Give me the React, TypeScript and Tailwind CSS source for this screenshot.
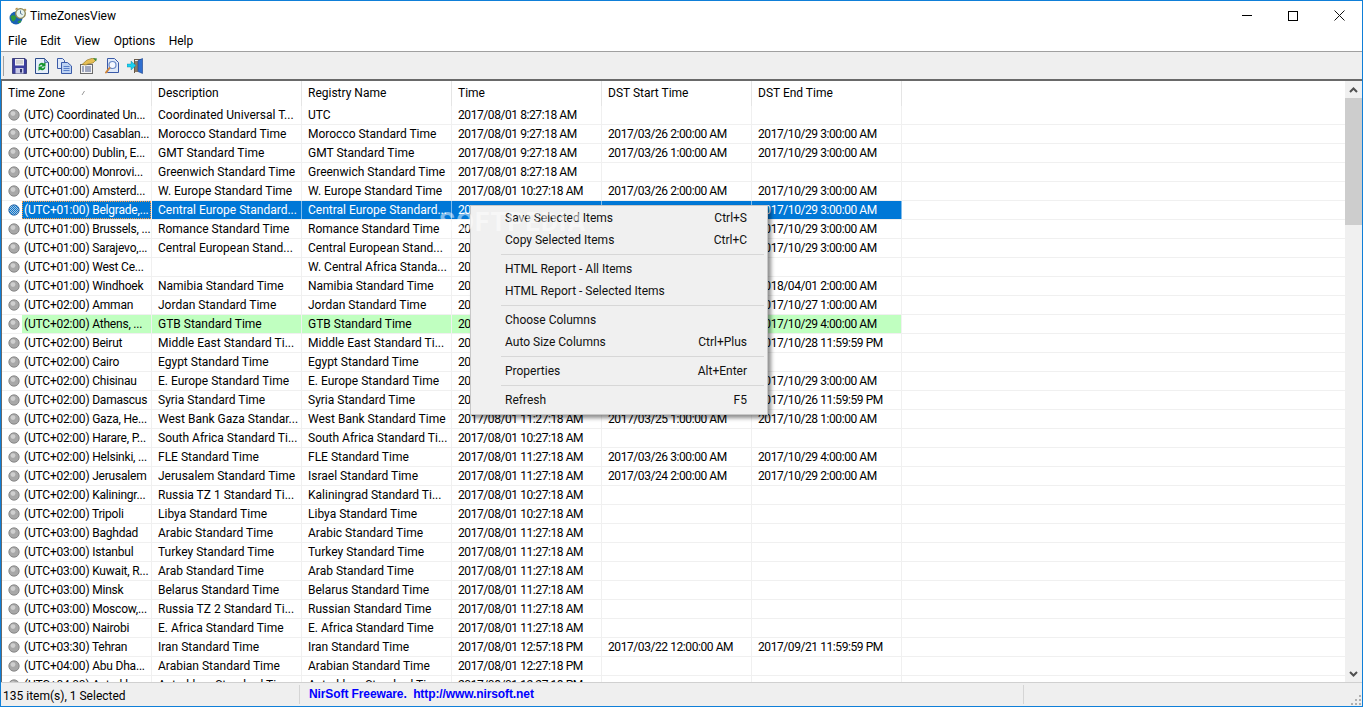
const font = "font-['Roboto',sans-serif]";

type Row = [string, string, string, string, string?, string?];

const rows: Row[] = [
  ['(UTC) Coordinated Un...', 'Coordinated Universal T...', 'UTC', '2017/08/01 8:27:18 AM'],
  ['(UTC+00:00) Casablan...', 'Morocco Standard Time', 'Morocco Standard Time', '2017/08/01 9:27:18 AM', '2017/03/26 2:00:00 AM', '2017/10/29 3:00:00 AM'],
  ['(UTC+00:00) Dublin, E...', 'GMT Standard Time', 'GMT Standard Time', '2017/08/01 9:27:18 AM', '2017/03/26 1:00:00 AM', '2017/10/29 3:00:00 AM'],
  ['(UTC+00:00) Monrovi...', 'Greenwich Standard Time', 'Greenwich Standard Time', '2017/08/01 8:27:18 AM'],
  ['(UTC+01:00) Amsterd...', 'W. Europe Standard Time', 'W. Europe Standard Time', '2017/08/01 10:27:18 AM', '2017/03/26 2:00:00 AM', '2017/10/29 3:00:00 AM'],
  ['(UTC+01:00) Belgrade,...', 'Central Europe Standard...', 'Central Europe Standard...', '2017/08/01 10:27:18 AM', '2017/03/26 2:00:00 AM', '2017/10/29 3:00:00 AM'],
  ['(UTC+01:00) Brussels, ...', 'Romance Standard Time', 'Romance Standard Time', '2017/08/01 10:27:18 AM', '2017/03/26 2:00:00 AM', '2017/10/29 3:00:00 AM'],
  ['(UTC+01:00) Sarajevo,...', 'Central European Stand...', 'Central European Stand...', '2017/08/01 10:27:18 AM', '2017/03/26 2:00:00 AM', '2017/10/29 3:00:00 AM'],
  ['(UTC+01:00) West Ce...', '', 'W. Central Africa Standa...', '2017/08/01 9:27:18 AM'],
  ['(UTC+01:00) Windhoek', 'Namibia Standard Time', 'Namibia Standard Time', '2017/08/01 10:27:18 AM', '2017/09/03 2:00:00 AM', '2018/04/01 2:00:00 AM'],
  ['(UTC+02:00) Amman', 'Jordan Standard Time', 'Jordan Standard Time', '2017/08/01 11:27:18 AM', '2017/03/30 11:59:59 PM', '2017/10/27 1:00:00 AM'],
  ['(UTC+02:00) Athens, ...', 'GTB Standard Time', 'GTB Standard Time', '2017/08/01 11:27:18 AM', '2017/03/26 3:00:00 AM', '2017/10/29 4:00:00 AM'],
  ['(UTC+02:00) Beirut', 'Middle East Standard Ti...', 'Middle East Standard Ti...', '2017/08/01 11:27:18 AM', '2017/03/25 11:59:59 PM', '2017/10/28 11:59:59 PM'],
  ['(UTC+02:00) Cairo', 'Egypt Standard Time', 'Egypt Standard Time', '2017/08/01 10:27:18 AM'],
  ['(UTC+02:00) Chisinau', 'E. Europe Standard Time', 'E. Europe Standard Time', '2017/08/01 11:27:18 AM', '2017/03/26 2:00:00 AM', '2017/10/29 3:00:00 AM'],
  ['(UTC+02:00) Damascus', 'Syria Standard Time', 'Syria Standard Time', '2017/08/01 11:27:18 AM', '2017/03/30 11:59:59 PM', '2017/10/26 11:59:59 PM'],
  ['(UTC+02:00) Gaza, He...', 'West Bank Gaza Standar...', 'West Bank Standard Time', '2017/08/01 11:27:18 AM', '2017/03/25 1:00:00 AM', '2017/10/28 1:00:00 AM'],
  ['(UTC+02:00) Harare, P...', 'South Africa Standard Ti...', 'South Africa Standard Ti...', '2017/08/01 10:27:18 AM'],
  ['(UTC+02:00) Helsinki, ...', 'FLE Standard Time', 'FLE Standard Time', '2017/08/01 11:27:18 AM', '2017/03/26 3:00:00 AM', '2017/10/29 4:00:00 AM'],
  ['(UTC+02:00) Jerusalem', 'Jerusalem Standard Time', 'Israel Standard Time', '2017/08/01 11:27:18 AM', '2017/03/24 2:00:00 AM', '2017/10/29 2:00:00 AM'],
  ['(UTC+02:00) Kaliningr...', 'Russia TZ 1 Standard Ti...', 'Kaliningrad Standard Ti...', '2017/08/01 10:27:18 AM'],
  ['(UTC+02:00) Tripoli', 'Libya Standard Time', 'Libya Standard Time', '2017/08/01 10:27:18 AM'],
  ['(UTC+03:00) Baghdad', 'Arabic Standard Time', 'Arabic Standard Time', '2017/08/01 11:27:18 AM'],
  ['(UTC+03:00) Istanbul', 'Turkey Standard Time', 'Turkey Standard Time', '2017/08/01 11:27:18 AM'],
  ['(UTC+03:00) Kuwait, R...', 'Arab Standard Time', 'Arab Standard Time', '2017/08/01 11:27:18 AM'],
  ['(UTC+03:00) Minsk', 'Belarus Standard Time', 'Belarus Standard Time', '2017/08/01 11:27:18 AM'],
  ['(UTC+03:00) Moscow,...', 'Russia TZ 2 Standard Ti...', 'Russian Standard Time', '2017/08/01 11:27:18 AM'],
  ['(UTC+03:00) Nairobi', 'E. Africa Standard Time', 'E. Africa Standard Time', '2017/08/01 11:27:18 AM'],
  ['(UTC+03:30) Tehran', 'Iran Standard Time', 'Iran Standard Time', '2017/08/01 12:57:18 PM', '2017/03/22 12:00:00 AM', '2017/09/21 11:59:59 PM'],
  ['(UTC+04:00) Abu Dha...', 'Arabian Standard Time', 'Arabian Standard Time', '2017/08/01 12:27:18 PM'],
  ['(UTC+04:00) Astrakh...', 'Astrakhan Standard Time', 'Astrakhan Standard Time', '2017/08/01 12:27:18 PM'],
];

const headers = ['Time Zone', 'Description', 'Registry Name', 'Time', 'DST Start Time', 'DST End Time'];

type MenuEntry = { label: string; keys?: string } | 'sep';

const menu: MenuEntry[] = [
  { label: 'Save Selected Items', keys: 'Ctrl+S' },
  { label: 'Copy Selected Items', keys: 'Ctrl+C' },
  'sep',
  { label: 'HTML Report - All Items' },
  { label: 'HTML Report - Selected Items' },
  'sep',
  { label: 'Choose Columns' },
  { label: 'Auto Size Columns', keys: 'Ctrl+Plus' },
  'sep',
  { label: 'Properties', keys: 'Alt+Enter' },
  'sep',
  { label: 'Refresh', keys: 'F5' },
];

function Ball({ selected }: { selected?: boolean }) {
  return (
    <svg width="12" height="12" viewBox="0 0 12 12" className="shrink-0">
      <defs>
        <pattern id="dither" width="2" height="2" patternUnits="userSpaceOnUse">
          <rect width="2" height="2" fill="#b5c4d6" />
          <rect width="1" height="1" fill="#0078d7" />
          <rect x="1" y="1" width="1" height="1" fill="#0078d7" />
        </pattern>
      </defs>
      <circle cx="6" cy="6" r="5.200" fill={selected ? 'url(#dither)' : '#a8a8a8'} stroke={selected ? '#1e5a9c' : '#7a7a7a'} strokeWidth="0.8" />
      {!selected && <circle cx="5" cy="4.600" r="2.400" fill="#cfcfcf" />}
    </svg>
  );
}

function AppIcon() {
  return (
    <svg width="18" height="18" viewBox="0 0 18 18">
      <circle cx="7" cy="11" r="6.500" fill="#1a62b5" />
      <path d="M1.500 9.500c2-2 4-1.500 5-.5s.5 3-.5 4-2 2.500-3 .5zM8.500 15.500c.5-2 3-2.500 4-1.500-1 2-2.500 2.500-4 1.500z" fill="#2f9a3a" />
      <path d="M6.500 2.500l2-1.500M15.500 2l1.500 1.500" stroke="#b5893a" strokeWidth="1.500" />
      <circle cx="11.500" cy="6.500" r="4.800" fill="#e6f2ee" stroke="#8a8450" strokeWidth="1.300" />
      <path d="M11.500 3.500v3l2 1" fill="none" stroke="#4a6a8a" strokeWidth="0.900" />
    </svg>
  );
}

function SaveIcon() {
  return (
    <svg width="15" height="16" viewBox="0 0 15 16">
      <path d="M.5.500h12.500l1.500 1.500v13.500H.5z" fill="#3c3f9e" stroke="#20245f" strokeWidth="0.700" />
      <rect x="3" y="1" width="9" height="6.500" fill="#f0f0f0" />
      <path d="M4 3h7M4 5h7" stroke="#b5b5b5" />
      <rect x="3.500" y="10" width="8" height="5.500" fill="#c9cbe6" />
      <rect x="8" y="11" width="2" height="3.500" fill="#30346f" />
    </svg>
  );
}

function RefreshIcon() {
  return (
    <svg width="14" height="16" viewBox="0 0 14 16">
      <path d="M.5.500h9l4 4v11H.5z" fill="#e6eefa" stroke="#2a4a8a" />
      <path d="M9.500.5v4h4z" fill="#9ab6e6" stroke="#2a4a8a" strokeWidth="0.600" />
      <path d="M3.500 7.500a3.500 3.500 0 0 1 5.500-2L10.500 4v4.500H6L7.500 7A1.600 1.600 0 0 0 5 8z" fill="#14962f" />
      <path d="M10.500 9.500a3.500 3.500 0 0 1-5.500 2L3.500 13V8.500H8L6.500 10A1.600 1.600 0 0 0 9 9z" fill="#14962f" />
    </svg>
  );
}

function CopyIcon() {
  return (
    <svg width="15" height="16" viewBox="0 0 15 16">
      <path d="M.5.500h5l2 2v8h-7z" fill="#dfe9f8" stroke="#3a5aa8" />
      <path d="M4.500 4.500h6l4 3.500v7.500h-10z" fill="#bcd2f2" stroke="#3a5aa8" />
      <path d="M6.500 8.500h6M6.500 10.500h6M6.500 12.500h6" stroke="#5a7fc8" />
    </svg>
  );
}

function PropsIcon() {
  return (
    <svg width="17" height="16" viewBox="0 0 17 16">
      <rect x=".5" y="6.500" width="12" height="9" fill="#f4f4f4" stroke="#6a6a6a" />
      <path d="M2 9h2M5 9h6M2 11h2M5 11h6M2 13h2M5 13h6" stroke="#4a5a8a" />
      <path d="M2 6.500L7 2l6-2 3 2-3 3-5 1-2 1z" fill="#e6bf55" stroke="#8a6d1f" strokeWidth="0.600" />
      <path d="M13 0l4 .5-1 3z" fill="#3f8a3a" />
    </svg>
  );
}

function FindIcon() {
  return (
    <svg width="14" height="16" viewBox="0 0 14 16">
      <path d="M2.500.500h7l4 4v10h-11z" fill="#dfe9f8" stroke="#3a5aa8" />
      <circle cx="7.500" cy="7" r="3.500" fill="#f4f8ff" stroke="#6a8ac8" strokeWidth="1.200" />
      <path d="M4.500 10L1 14.500" stroke="#d0853a" strokeWidth="2" strokeLinecap="round" />
    </svg>
  );
}

function ExitIcon() {
  return (
    <svg width="17" height="16" viewBox="0 0 17 16">
      <path d="M7 1h8v14h-1V2H8v13H7z" fill="#6a5a48" />
      <path d="M8 3h3v11H8z" fill="#8a7a66" />
      <path d="M11 2.500l4.500-2v15L11 13.500z" fill="#2f6fd0" stroke="#1a3f8a" strokeWidth="0.600" />
      <path d="M0 6h4V3l5 4.500-5 4.500V9H0z" fill="#19d0f0" stroke="#0a7a9a" strokeWidth="0.400" />
    </svg>
  );
}

function Cell({ children, className = '' }: { children?: React.ReactNode; className?: string }) {
  return (
    <div className={`w-[150px] shrink-0 h-full flex items-center pl-[6px] border-r whitespace-nowrap overflow-hidden ${className}`}>
      {children}
    </div>
  );
}

function ListRow({ row, index }: { row: Row; index: number }) {
  const selected = index === 5;
  const green = index === 11;
  const bg = selected ? 'bg-[#0078d7] text-white' : green ? 'bg-[#c0ffc0] text-black' : 'text-black';
  const line = selected ? 'border-[#ffffff80]' : 'border-[#f0f0f0]';
  const coloured = selected || green;
  return (
    <div className="h-[19px] shrink-0 flex border-b border-[#f0f0f0]">
      <div className="w-[150px] shrink-0 h-full flex items-center border-r border-[#f0f0f0] pl-[6px] text-black">
        <Ball selected={selected} />
        <span className={`ml-[2px] pl-[2px] h-full flex-1 flex items-center whitespace-nowrap overflow-hidden tracking-[-0.2px] ${coloured ? bg : ''} ${selected ? 'outline-1 -outline-offset-1 outline-dotted outline-[#ff9a3c]' : ''}`}>
          {row[0]}
        </span>
      </div>
      {[1, 2, 3, 4, 5].map((i) => (
        <Cell key={i} className={`${line} ${coloured ? bg : 'text-black'} ${i >= 3 ? 'tracking-[-0.42px]' : ''}`}>
          {row[i]}
        </Cell>
      ))}
      <div className="flex-1 h-full" />
    </div>
  );
}

function ContextMenu() {
  return (
    <div className="absolute left-[469px] top-[204px] w-[298px] h-[210px] bg-[#f0f0f0] border border-[#c8c8c8] shadow-[3px_3px_4px_rgba(0,0,0,0.45)] pt-[1px] text-[#111]">
      {menu.map((m, i) =>
        m === 'sep' ? (
          <div key={i} className="h-[7px] flex items-center pl-[30px] pr-[3px]">
            <div className="h-px w-full bg-[#d7d7d7]" />
          </div>
        ) : (
          <div key={i} className="h-[22px] flex items-center justify-between pl-[34px] pr-[20px]">
            <span>{m.label}</span>
            {m.keys && <span>{m.keys}</span>}
          </div>
        ),
      )}
    </div>
  );
}

export default function App() {
  return (
    <div className={`${font} relative w-[1363px] h-[707px] flex flex-col overflow-hidden border border-[#0f7fd8] bg-white text-[12px] text-black`}>
      <div className="h-[29px] shrink-0 flex items-center pl-[8px]">
        <AppIcon />
        <span className="ml-[3px]">TimeZonesView</span>
        <div className="ml-auto flex items-center text-black">
          <div className="w-[46px] flex justify-center">
            <div className="w-[10px] h-px bg-black" />
          </div>
          <div className="w-[46px] flex justify-center">
            <div className="w-[10px] h-[10px] border border-black" />
          </div>
          <div className="w-[46px] flex justify-center">
            <svg width="11" height="11" viewBox="0 0 11 11">
              <path d="M.5.500l10 10M10.500.500l-10 10" stroke="#111" fill="none" />
            </svg>
          </div>
        </div>
      </div>

      <div className="h-[21px] shrink-0 flex items-center gap-[13.5px] pl-[7px] pt-[1px]">
        {['File', 'Edit', 'View', 'Options', 'Help'].map((m) => (
          <span key={m}>{m}</span>
        ))}
      </div>

      <div className="h-[28px] shrink-0 bg-[#efefef] border-t border-[#a0a0a0] flex items-center pl-[2px]">
        <div className="w-px h-[20px] bg-[#a0a0a0] mr-[8px]" />
        <div className="flex items-center gap-[8px]">
          <SaveIcon />
          <RefreshIcon />
          <CopyIcon />
          <PropsIcon />
          <FindIcon />
          <ExitIcon />
        </div>
      </div>

      <div className="flex-1 min-h-0 flex border-t-2 border-l border-[#696969]">
        <div className="flex-1 min-w-0 flex flex-col overflow-hidden">
          <div className="h-[25px] shrink-0 flex">
            {headers.map((h, i) => (
              <div key={h} className="w-[150px] shrink-0 flex items-center pl-[6px] pb-[2px] border-r border-[#e5e5e5] relative">
                {h}
                {i === 0 && (
                  <svg width="6" height="6" viewBox="0 0 6 6" className="absolute left-[78px] top-[9px]">
                    <path d="M4.500 1L2 5" stroke="#999" fill="none" />
                  </svg>
                )}
              </div>
            ))}
          </div>
          {rows.map((r, i) => (
            <ListRow key={i} row={r} index={i} />
          ))}
        </div>
        <div className="w-[17px] shrink-0 bg-[#f0f0f0] flex flex-col">
          <div className="h-[17px] shrink-0 flex items-center justify-center">
            <svg width="9" height="6" viewBox="0 0 9 6">
              <path d="M1 5l3.500-3.500L8 5" stroke="#505050" strokeWidth="2" fill="none" />
            </svg>
          </div>
          <div className="h-[127px] shrink-0 bg-[#cdcdcd]" />
          <div className="mt-auto h-[17px] shrink-0 flex items-center justify-center">
            <svg width="9" height="6" viewBox="0 0 9 6">
              <path d="M1 1l3.500 3.500L8 1" stroke="#505050" strokeWidth="2" fill="none" />
            </svg>
          </div>
        </div>
      </div>

      <div className="h-[24px] shrink-0 bg-[#efefef] border-t border-[#d0d0d0] flex relative">
        <div className="w-[299px] flex items-center pl-[2px] pt-[3px] border-r border-[#d5d5d5] my-[2px]">135 item(s), 1 Selected</div>
        <div className="w-[724px] pl-[9px] border-r border-[#d5d5d5] my-[2px] text-[#0000ff] font-bold font-['Liberation_Sans',sans-serif] tracking-[-0.1px] whitespace-pre">
          NirSoft Freeware.  http://www.nirsoft.net
        </div>
        <svg width="12" height="12" viewBox="0 0 12 12" className="absolute right-0 bottom-0">
          <path d="M9 1h2v2H9zM5 5h2v2H5zM9 5h2v2H9zM1 9h2v2H1zM5 9h2v2H5zM9 9h2v2H9z" fill="#b0b0b0" />
        </svg>
      </div>

      <ContextMenu />
      <div className="absolute left-[438px] top-[202px] text-[26px] font-bold tracking-[1px] text-white/50 pointer-events-none">
        SOFTPEDIA
      </div>
    </div>
  );
}
